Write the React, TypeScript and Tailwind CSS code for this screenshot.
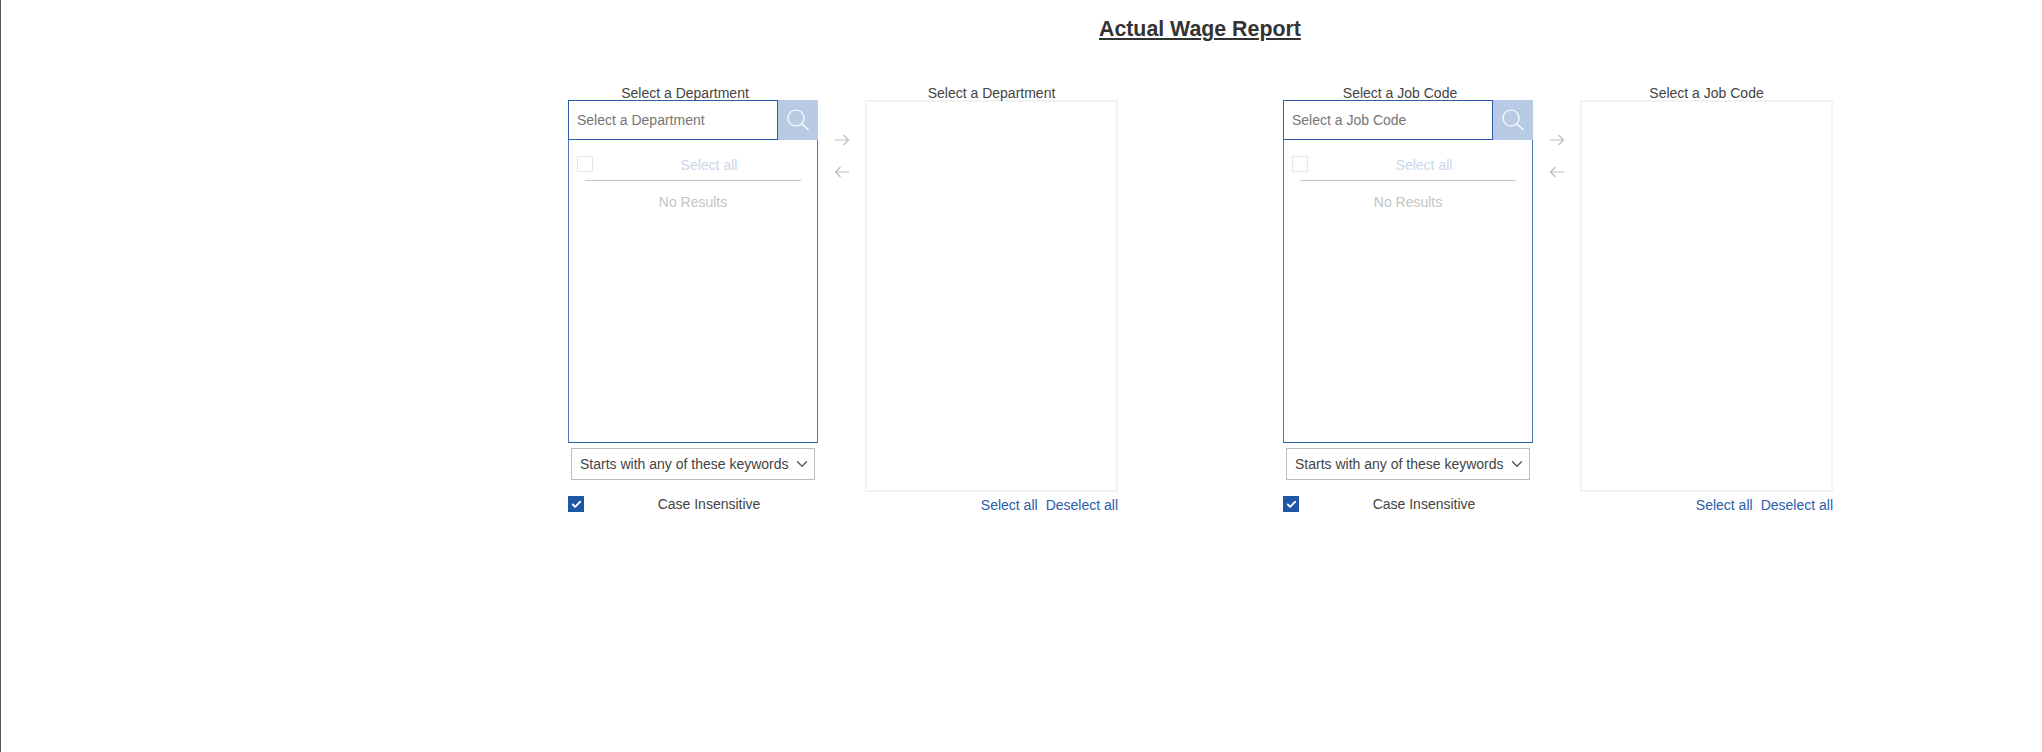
import React from 'react';
import { ChevronDown, Check } from 'lucide-react';

const SearchIcon = () => (
  <svg width="24" height="24" viewBox="0 0 24 24" fill="none" stroke="#fff" strokeWidth="1.2">
    <circle cx="10" cy="10" r="8" />
    <path d="M15.8 15.8 L22.5 22" />
  </svg>
);

const Arrow = ({ back }: { back?: boolean }) => (
  <svg width="16" height="12" viewBox="0 0 16 12" fill="none" stroke="#bdbdbd" strokeWidth="1.2">
    {back ? <path d="M15 6H1.5M6.5 1L1.5 6l5 5" /> : <path d="M1 6h13.5M9.5 1l5 5-5 5" />}
  </svg>
);

const DualList = ({ label }: { label: string }) => (
  <div className="flex w-[550px]">
    <div className="w-[250px]">
      <div className="h-[20px] leading-[26px] pr-[16px] text-center text-sm text-[#444]">{label}</div>
      <div className="flex h-[40px]">
        <div className="w-[210px] h-[40px] border border-[#2a5ea8] px-[8px] flex items-center text-sm text-[#757575] bg-white">
          {label}
        </div>
        <div className="w-[40px] h-[40px] bg-[#b9cbe4] flex items-center justify-center">
          <SearchIcon />
        </div>
      </div>
      <div className="h-[303px] border-x border-b border-x-[#4a78bd] border-b-[#2a5ea8] relative px-[16px]">
        <div className="h-[40px] flex items-center relative">
          <span className="absolute left-[-8px] top-[16px] w-[16px] h-[16px] border border-[#e6e6e6]" />
          <span className="w-full pl-[32px] pt-[10px] leading-[20px] text-center text-sm text-[#c9d6ea]">Select all</span>
        </div>
        <div className="border-t border-[#c4c4c4]" />
        <div className="mt-[11px] text-center text-sm text-[#c4c4c4]">No Results</div>
      </div>
      <div className="mt-[5px] mx-[3px] h-[32px] border border-[#bdbdbd] flex items-center justify-between pl-[8px] pr-[3px] text-sm text-[#444]">
        <span>Starts with any of these keywords</span>
        <ChevronDown size={18} color="#555" strokeWidth={1.7} />
      </div>
      <div className="mt-[16px] h-[16px] flex items-center">
        <span className="w-[16px] h-[16px] bg-[#1f56a5] flex items-center justify-center">
          <Check size={11} color="#fff" strokeWidth={4} />
        </span>
        <span className="flex-1 pl-[16px] text-center text-sm text-[#444]">Case Insensitive</span>
      </div>
    </div>
    <div className="w-[47px] pt-[38px] flex flex-col items-center">
      <div className="mt-[16px] h-[12px] flex items-center"><Arrow /></div>
      <div className="mt-[20px] h-[12px] flex items-center"><Arrow back /></div>
    </div>
    <div className="w-[253px]">
      <div className="h-[20px] leading-[26px] text-center text-sm text-[#444]">{label}</div>
      <div className="h-[392px] border-2 border-[#f2f2f2]" />
      <div className="mt-[3px] flex justify-end gap-[8px] text-sm text-[#2a5ea8]">
        <span>Select all</span>
        <span>Deselect all</span>
      </div>
    </div>
  </div>
);

export default function App() {
  return (
    <div className="h-[752px] border-l border-[#555] bg-white font-['Liberation_Sans',Arial,sans-serif] overflow-hidden">
      <h1 className="pt-[15px] pl-[1098px] text-[21.33px] leading-[28px] font-bold underline text-[#333]">Actual Wage Report</h1>
      <div className="mt-[37px] ml-[567px] flex gap-[165px]">
        <DualList label="Select a Department" />
        <DualList label="Select a Job Code" />
      </div>
    </div>
  );
}
